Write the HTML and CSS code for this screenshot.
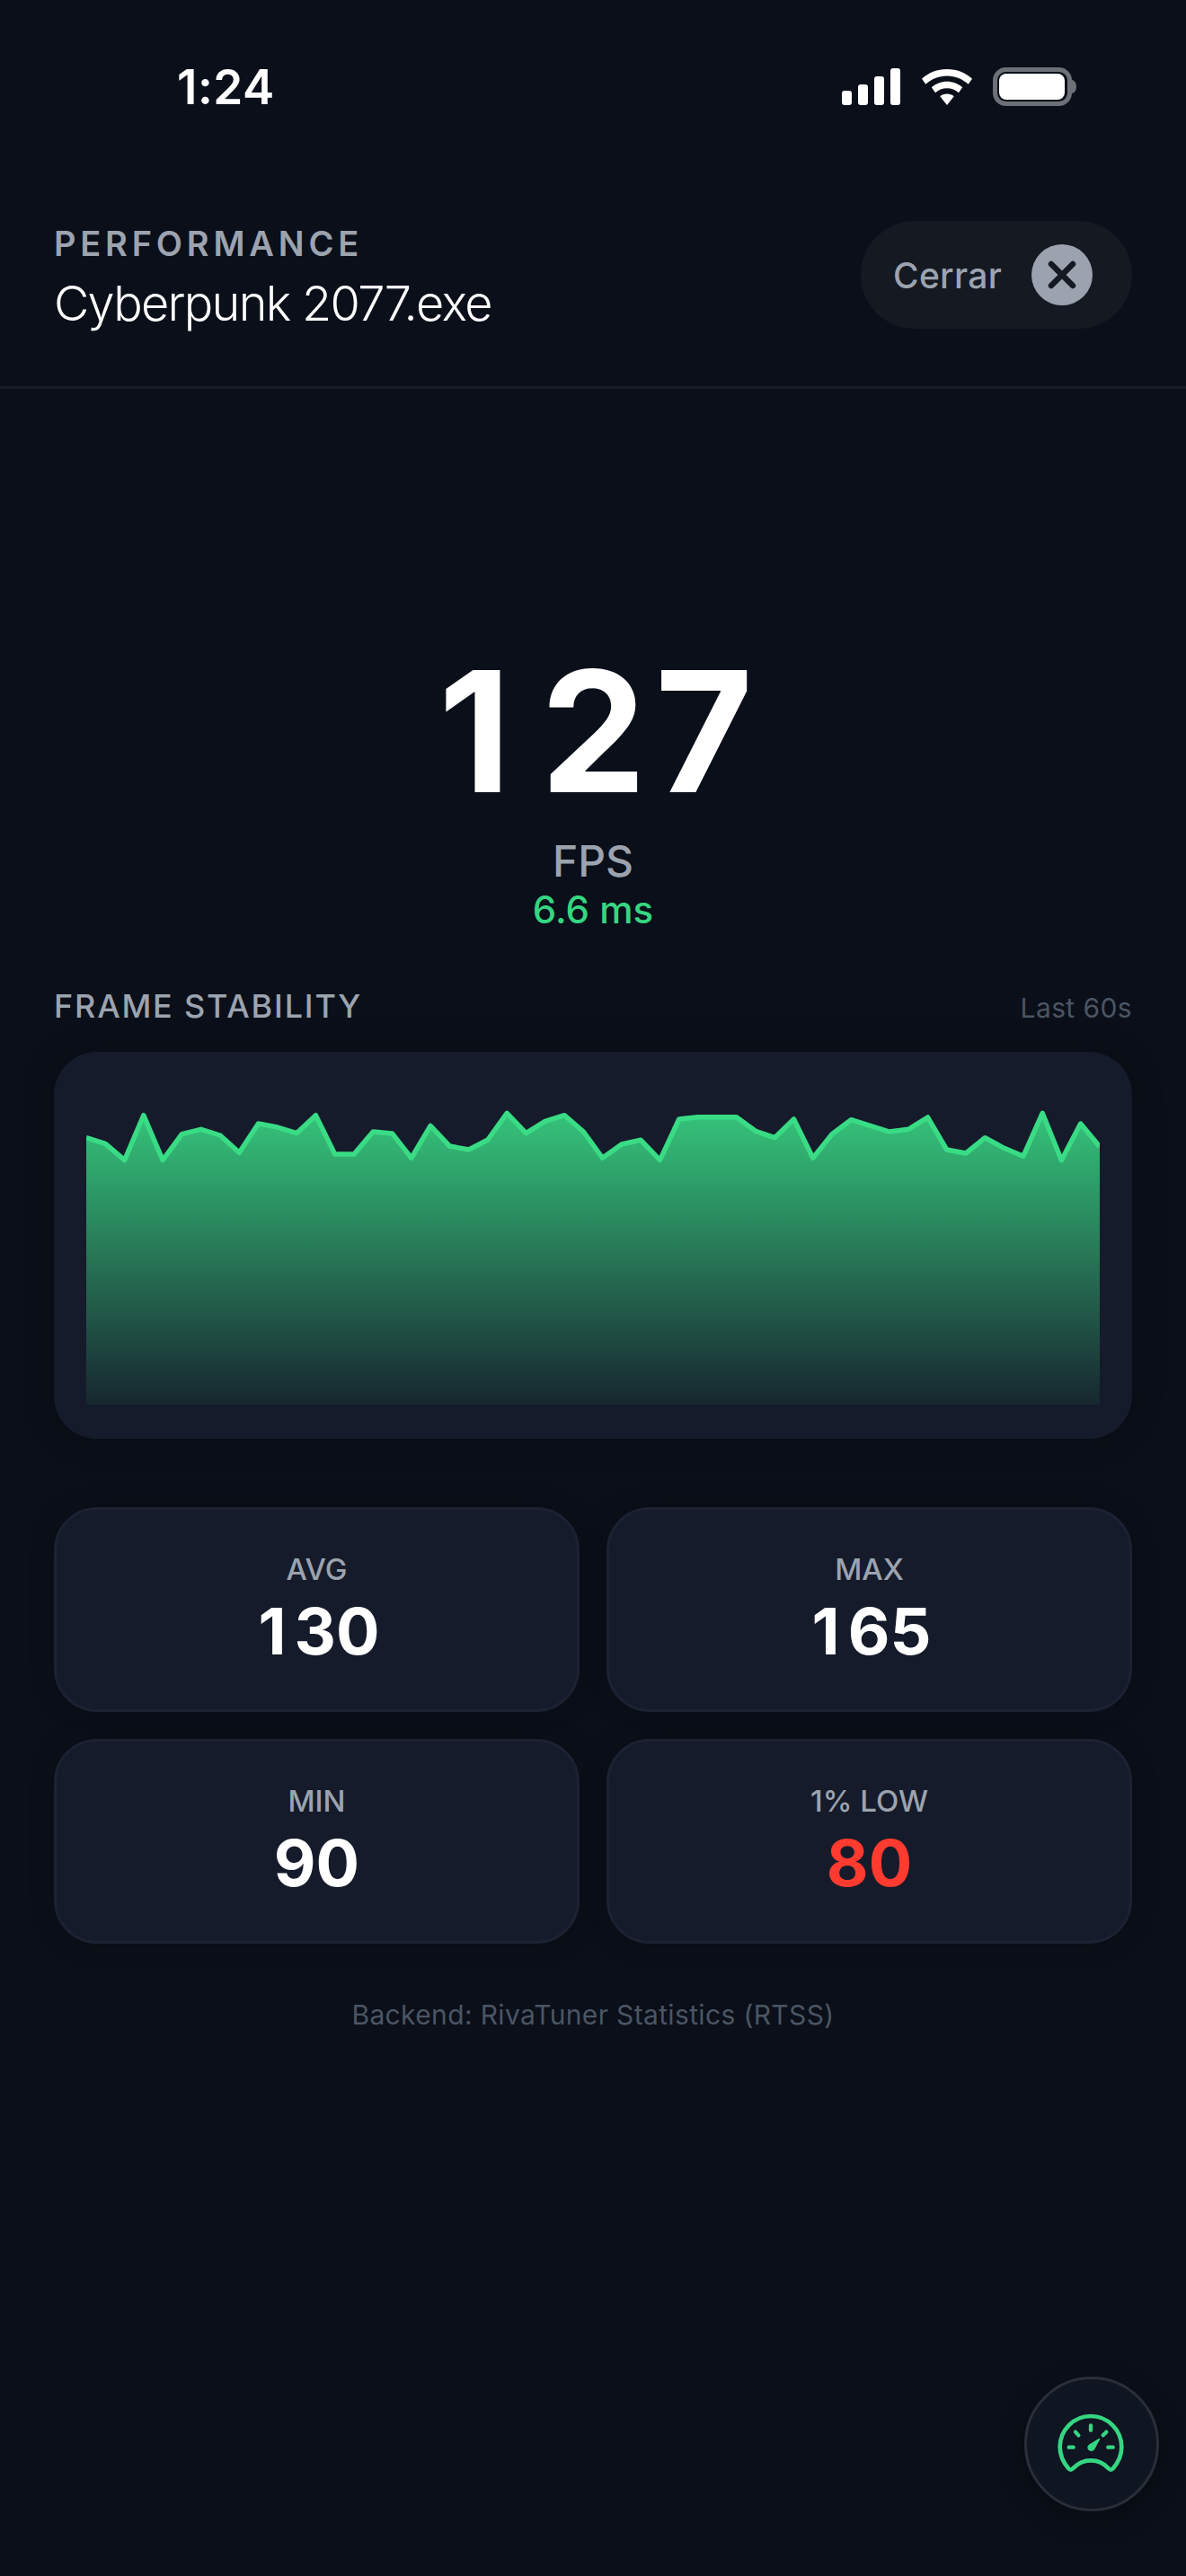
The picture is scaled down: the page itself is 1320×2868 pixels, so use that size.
FILE: index.html
```html
<!DOCTYPE html>
<html lang="es">
<head>
<meta charset="utf-8">
<title>Performance</title>
<link rel="stylesheet" href="styles.css">
</head>
<body>
<div class="screen">
  <div class="status">
    <span class="time">1:24</span>
    <div class="status-icons">
      <svg class="signal" width="65" height="41" viewBox="0 0 65 41"><rect x="0" y="25" width="11" height="16" rx="3" /><rect x="18" y="18" width="11" height="23" rx="3" /><rect x="36" y="9" width="11" height="32" rx="3" /><rect x="54" y="0" width="11" height="41" rx="3" /></svg>
      <svg class="wifi" width="58" height="40" viewBox="0 0 58 42" preserveAspectRatio="none"><path d="M29 0C18 0 8.500 4.200 1 11.200L5.300 17.500C11.500 11.500 20 7.800 29 7.800S46.500 11.500 52.700 17.500L57 11.200C49.500 4.200 40 0 29 0Z"/><path d="M29 14.500C22.500 14.500 16.500 17 11.800 21.300L16 27.500C19.300 24.200 24 22.200 29 22.200S38.700 24.200 42 27.500L46.200 21.300C41.500 17 35.500 14.500 29 14.500Z"/><path d="M29 29C26 29 23.300 30 21.200 31.800L29 42L36.800 31.800C34.700 30 32 29 29 29Z"/></svg>
      <svg class="battery" width="93" height="43" viewBox="0 0 93 43"><rect x="2.500" y="2.500" width="83" height="38" rx="12" class="batt-frame"/><rect x="7" y="7" width="73" height="29" rx="8" class="batt-fill"/><path d="M88 14C91 14.500 93 17.500 93 21.500S91 28.500 88 29Z" class="batt-nub"/></svg>
    </div>
  </div>

  <header class="header">
    <div class="title-block">
      <div class="eyebrow">PERFORMANCE</div>
      <div class="process">Cyberpunk 2077.exe</div>
    </div>
    <div class="close-pill">
      <span class="close-text">Cerrar</span>
      <span class="close-circle">
        <svg width="68" height="68" viewBox="0 0 68 68"><path d="M22 22L46 46M46 22L22 46"/></svg>
      </span>
    </div>
  </header>

  <main class="content">
    <section class="hero">
      <div class="fps"><span class="one">1</span>27</div>
      <div class="fps-label">FPS</div>
      <div class="ms">6.6 ms</div>
    </section>

    <div class="chart-head">
      <span class="chart-title">FRAME STABILITY</span>
      <span class="chart-note">Last 60s</span>
    </div>
    <div class="chart-card">
      <svg class="chart" width="1128" height="358" viewBox="96 1206 1128 358">
        <defs>
          <linearGradient id="area" x1="0" y1="0" x2="0" y2="1">
            <stop offset="0" stop-color="#39d884" stop-opacity="0.89"/>
            <stop offset="1" stop-color="#39d884" stop-opacity="0.06"/>
          </linearGradient>
        </defs>
        <polygon class="area" points="96,1266.700 117.300,1273.300 138.600,1291.700 159.800,1241.700 181.100,1291.700 202.400,1262.700 223.700,1257.300 245,1264 266.300,1283.300 287.500,1251 308.800,1255 330.100,1261.700 351.400,1241.700 372.700,1285 394,1285 415.200,1260 436.500,1262 457.800,1289.300 479.100,1253.300 500.400,1276 521.700,1280 542.900,1269 564.200,1239.300 585.500,1261.700 606.800,1248.300 628.100,1241.700 649.400,1260 670.600,1289.300 691.900,1274 713.200,1269.300 734.500,1291.700 755.800,1246 777.100,1243.700 798.300,1243.700 819.600,1243.700 840.900,1259.300 862.200,1266.700 883.500,1246 904.800,1289.300 926,1262.700 947.300,1246.700 968.600,1253.300 989.900,1260 1011.200,1257.300 1032.500,1244 1053.700,1280 1075,1284 1096.300,1266.700 1117.600,1278.300 1138.900,1287.300 1160.200,1239.300 1181.400,1291.700 1202.700,1251 1224,1276.700 1224,1564 96,1564"/>
        <polyline class="line" points="96,1266.700 117.300,1273.300 138.600,1291.700 159.800,1241.700 181.100,1291.700 202.400,1262.700 223.700,1257.300 245,1264 266.300,1283.300 287.500,1251 308.800,1255 330.100,1261.700 351.400,1241.700 372.700,1285 394,1285 415.200,1260 436.500,1262 457.800,1289.300 479.100,1253.300 500.400,1276 521.700,1280 542.900,1269 564.200,1239.300 585.500,1261.700 606.800,1248.300 628.100,1241.700 649.400,1260 670.600,1289.300 691.900,1274 713.200,1269.300 734.500,1291.700 755.800,1246 777.100,1243.700 798.300,1243.700 819.600,1243.700 840.900,1259.300 862.200,1266.700 883.500,1246 904.800,1289.300 926,1262.700 947.300,1246.700 968.600,1253.300 989.900,1260 1011.200,1257.300 1032.500,1244 1053.700,1280 1075,1284 1096.300,1266.700 1117.600,1278.300 1138.900,1287.300 1160.200,1239.300 1181.400,1291.700 1202.700,1251 1224,1276.700"/>
      </svg>
    </div>

    <div class="stats">
      <div class="stat"><div class="stat-label">AVG</div><div class="stat-value"><span class="one-small">1</span>30</div></div>
      <div class="stat"><div class="stat-label">MAX</div><div class="stat-value"><span class="one-small">1</span>65</div></div>
      <div class="stat"><div class="stat-label">MIN</div><div class="stat-value">90</div></div>
      <div class="stat"><div class="stat-label">1% LOW</div><div class="stat-value stat-bad">80</div></div>
    </div>

    <div class="backend">Backend: RivaTuner Statistics (RTSS)</div>
  </main>

  <button class="fab" type="button" aria-label="Performance">
    <svg width="144" height="144" viewBox="69 87 432 432">
      <path class="gauge-outline" d="M222 385C240 366 262 358 282 358C302 358 325 366 342 385C346 390 352 390 356 385C374 365 385 340 385 313A103 103 0 1 0 179 313C179 340 190 365 208 385C212 390 218 390 222 385Z"/>
      <path class="gauge-tick" d="M209 314H224M340 314H356M282 241V257M231 263L241 274M334 263L323 274"/>
      <path class="gauge-needle" d="M311 286L293 320A11 11 0 0 1 273 313A11 11 0 0 1 278 306Z"/>
    </svg>
  </button>
</div>
</body>
</html>
```
FILE: styles.css
```css
* { box-sizing: border-box; }
html, body { margin: 0; padding: 0; background: #0a0f19; }
body { font-family: Inter, "Noto Sans", sans-serif; color: #fff; }

.screen {
  position: relative;
  width: 1320px;
  height: 2868px;
  overflow: hidden;
  background: #0a0f19;
  display: flex;
  flex-direction: column;
}

/* status bar */
.status {
  height: 174px;
  padding: 75px 122px 0 197px;
  display: flex;
  justify-content: space-between;
  align-items: flex-start;
  flex: none;
}
.time {
  font-size: 53px;
  font-weight: 600;
  line-height: 44px;
  letter-spacing: 0.500px;
}
.status-icons {
  display: flex;
  align-items: flex-start;
  gap: 22px;
}
.signal { fill: #fff; margin-top: 1px; margin-right: 1px; }
.wifi { fill: #fff; margin-top: 2px; }
.batt-frame { fill: none; stroke: #6d7077; stroke-width: 5; }
.batt-fill { fill: #fff; }
.batt-nub { fill: #6d7077; }

/* header */
.header {
  flex: none;
  height: 259px;
  padding: 72px 60px 0;
  border-bottom: 3px solid #161b25;
  display: flex;
  justify-content: space-between;
  align-items: flex-start;
}
.title-block { padding-top: 2px; }
.eyebrow {
  font-size: 38px;
  line-height: 46px;
  font-weight: 600;
  letter-spacing: 4.800px;
  color: #9ca3af;
}
.process {
  margin-top: 12px;
  font-size: 54px;
  line-height: 64px;
  font-weight: 300;
  letter-spacing: -1.700px;
  color: #fff;
}
.close-pill {
  width: 302px;
  height: 120px;
  border-radius: 60px;
  background: #141922;
  padding: 0 44px 0 36px;
  display: flex;
  align-items: center;
  justify-content: space-between;
}
.close-text {
  font-size: 39px;
  font-weight: 500;
  letter-spacing: 0.300px;
  color: #9ca3af;
}
.close-circle {
  width: 68px;
  height: 68px;
  border-radius: 50%;
  background: #9ca3af;
  display: flex;
}
.close-circle svg { fill: none; stroke: #141922; stroke-width: 6.500; stroke-linecap: round; }

/* content */
.content {
  flex: 1;
  padding: 0 60px;
  display: flex;
  flex-direction: column;
}
.hero {
  padding-top: 288px;
  text-align: center;
}
.fps {
  font-size: 187px;
  line-height: 187px;
  font-weight: 700;
  font-kerning: none;
  letter-spacing: 10px;
  padding-left: 16px;
  color: #fff;
}
.one { letter-spacing: 33px; }
.fps-label {
  margin-top: 22px;
  font-size: 48px;
  line-height: 58px;
  font-weight: 500;
  color: #9ca3af;
}
.ms {
  font-size: 42px;
  line-height: 50px;
  font-weight: 500;
  color: #35d682;
}

.chart-head {
  margin-top: 60px;
  display: flex;
  justify-content: space-between;
  align-items: baseline;
}
.chart-title {
  font-size: 36px;
  line-height: 44px;
  font-weight: 500;
  letter-spacing: 1.800px;
  color: #9ca3af;
}
.chart-note {
  font-size: 30px;
  letter-spacing: 0.400px;
  color: #4b5563;
}
.chart-card {
  margin-top: 29px;
  height: 431px;
  border-radius: 48px;
  background: #151b2a;
  box-shadow: 0 0 36px rgba(0, 0, 0, 0.22);
  padding: 35px 36px 0;
}
.chart { display: block; }
.area { fill: url(#area); }
.line { fill: none; stroke: #39dc85; stroke-width: 5.500; stroke-linejoin: round; }

.stats {
  margin-top: 76px;
  display: grid;
  grid-template-columns: 1fr 1fr;
  grid-auto-rows: 228px;
  gap: 30px;
}
.stat {
  border-radius: 48px;
  background: #151b2a;
  border: 3px solid #1c2232;
  box-shadow: 0 0 30px rgba(0, 0, 0, 0.18);
  padding-top: 46px;
  text-align: center;
}
.stat-label {
  font-size: 33px;
  line-height: 40px;
  font-weight: 500;
  color: #9ca3af;
}
.stat-value {
  margin-top: 6px;
  font-size: 72px;
  line-height: 86px;
  font-weight: 700;
  font-kerning: none;
  color: #fff;
}
.one-small { letter-spacing: 9px; padding-left: 5px; }
.stat-bad { color: #ff3b30; }

.backend {
  margin-top: 61px;
  text-align: center;
  font-size: 30px;
  line-height: 36px;
  letter-spacing: 0.350px;
  color: #4b5563;
}

.fab {
  position: absolute;
  left: 1140px;
  top: 2646px;
  width: 150px;
  height: 150px;
  border-radius: 50%;
  border: 3px solid #2a2e38;
  background: #0f1521;
  box-shadow: 0 8px 30px rgba(0, 0, 0, 0.3);
  padding: 0;
  display: flex;
}
.gauge-outline { fill: none; stroke: #35d682; stroke-width: 14; stroke-linejoin: round; }
.gauge-tick { fill: none; stroke: #35d682; stroke-width: 13; stroke-linecap: round; }
.gauge-needle { fill: #35d682; stroke: #35d682; stroke-width: 4; stroke-linejoin: round; }
```
